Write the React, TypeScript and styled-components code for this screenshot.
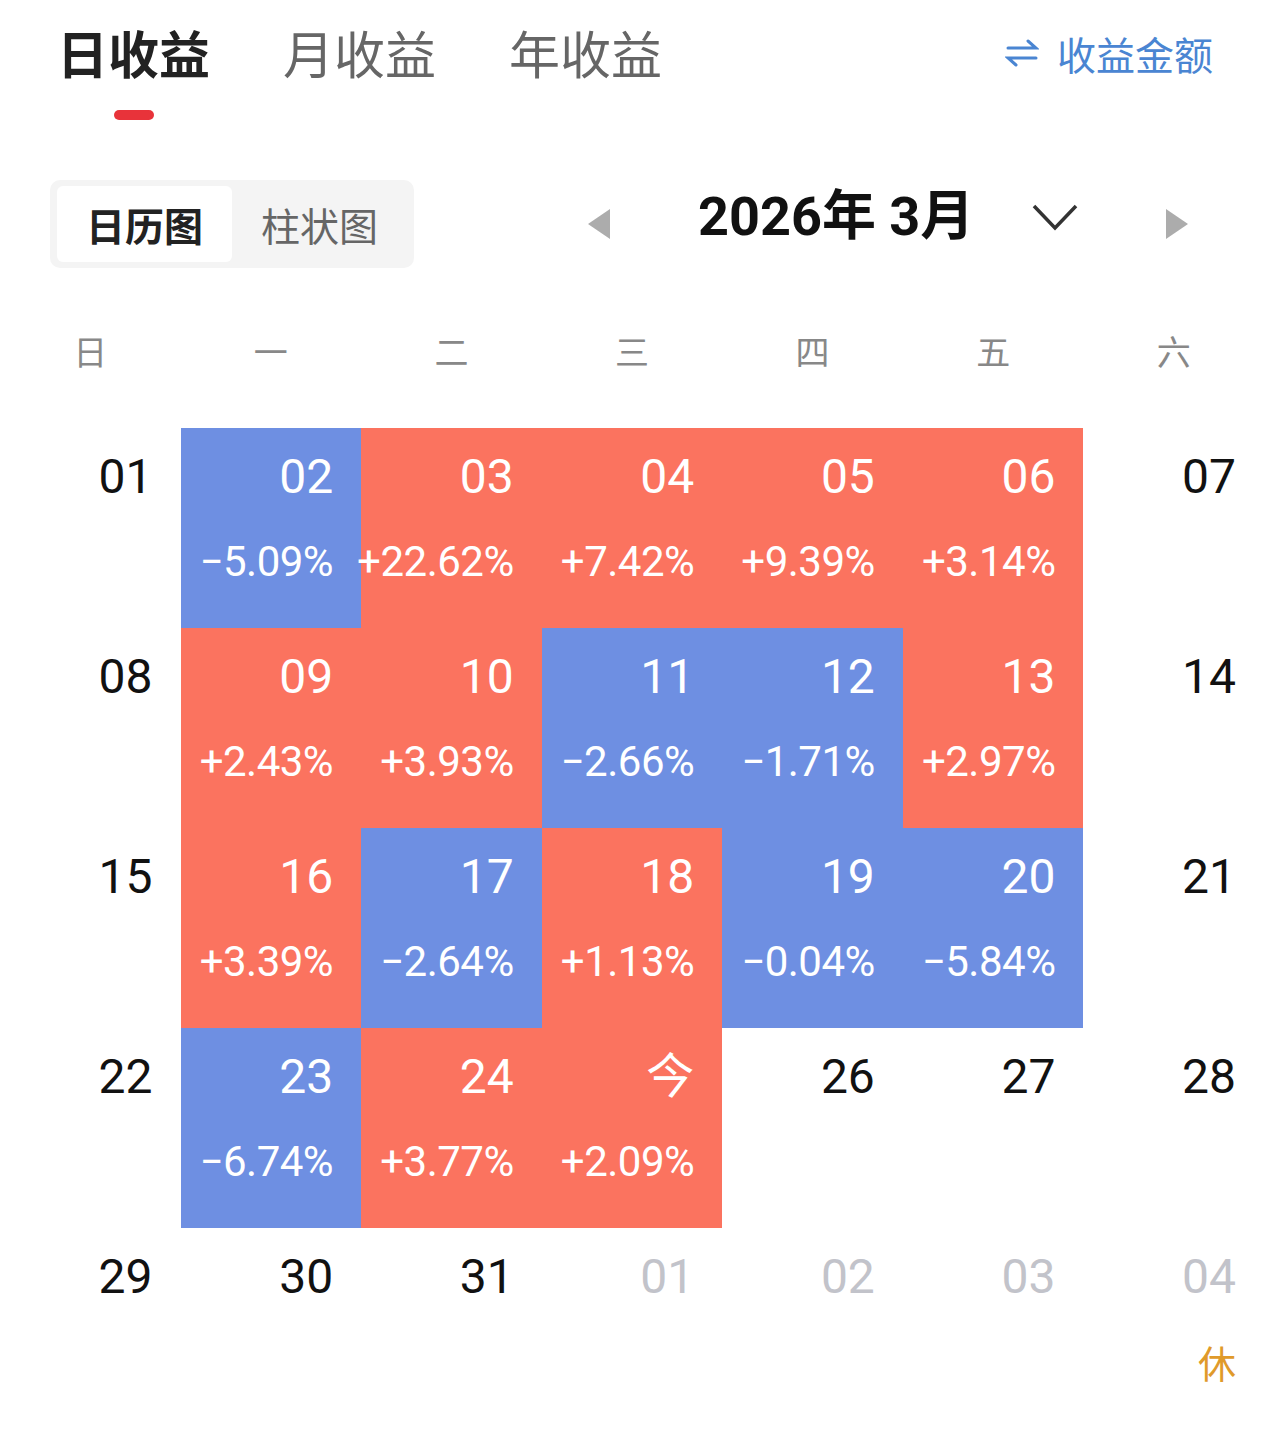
import React from 'react';
import styled, { createGlobalStyle } from 'styled-components';

const GlobalStyle = createGlobalStyle`
  body {
    margin: 0;
    background: #ffffff;
    font-family: Roboto, "Noto Sans CJK SC", sans-serif;
  }
`;

const Page = styled.div`
  width: 1264px;
  display: flex;
  flex-direction: column;
`;

const Header = styled.div`
  display: flex;
  align-items: flex-start;
  padding: 21px 51px 0 57px;
  gap: 73px;
`;

const Tab = styled.div<{ $active?: boolean }>`
  display: flex;
  flex-direction: column;
  align-items: center;

  span {
    font-family: "Noto Sans CJK SC", sans-serif;
    font-size: 51px;
    line-height: 62px;
    font-weight: ${({ $active }) => ($active ? 700 : 400)};
    color: ${({ $active }) => ($active ? '#222' : '#666')};
  }
`;

const Indicator = styled.div<{ $show?: boolean }>`
  margin-top: 27px;
  width: 40px;
  height: 10px;
  border-radius: 5px;
  background: ${({ $show }) => ($show ? '#e8333a' : 'transparent')};
`;

const SwitchLink = styled.div`
  margin-left: auto;
  display: flex;
  align-items: center;
  gap: 18px;
  height: 64px;
  color: #4a85d2;

  span {
    font-family: "Noto Sans CJK SC", sans-serif;
    font-size: 39px;
  }
`;

const ControlRow = styled.div`
  display: flex;
  align-items: center;
  padding: 0 50px;
  margin-top: 60px;
`;

const Segmented = styled.div`
  display: flex;
  width: 364px;
  height: 88px;
  box-sizing: border-box;
  padding: 6px 7px;
  background: #f4f4f4;
  border-radius: 10px;
`;

const Segment = styled.div<{ $active?: boolean }>`
  width: 176px;
  display: flex;
  align-items: center;
  justify-content: center;
  border-radius: 6px;
  background: ${({ $active }) => ($active ? '#ffffff' : 'transparent')};
  font-family: "Noto Sans CJK SC", sans-serif;
  font-size: 39px;
  font-weight: ${({ $active }) => ($active ? 700 : 400)};
  color: ${({ $active }) => ($active ? '#222' : '#666')};
`;

const MonthPicker = styled.div`
  display: flex;
  align-items: center;
  margin-left: 174px;
`;

const MonthTitle = styled.div`
  margin: -14px 58px 0 88px;
  font-family: Roboto, "Noto Sans CJK SC", sans-serif;
  font-size: 54px;
  font-weight: 700;
  color: #111;
  white-space: nowrap;
  line-height: 1;
`;

const Chevron = styled.svg`
  margin-right: 88px;
  margin-top: -12px;
`;

const WeekRow = styled.div`
  display: grid;
  grid-template-columns: repeat(7, minmax(0, 1fr));
  margin-top: 52px;
  height: 60px;
  align-items: center;
`;

const WeekLabel = styled.div`
  text-align: center;
  font-family: "Noto Sans CJK SC", sans-serif;
  font-size: 34px;
  color: #888;
`;

const Grid = styled.div`
  display: grid;
  grid-template-columns: repeat(7, minmax(0, 1fr));
  grid-auto-rows: 200px;
  margin-top: 48px;
`;

type Tone = 'up' | 'down' | 'none';

const toneBg: Record<Tone, string> = {
  up: '#fb735f',
  down: '#6e8fe2',
  none: 'transparent',
};

const Cell = styled.div<{ $tone: Tone }>`
  display: flex;
  flex-direction: column;
  align-items: flex-end;
  box-sizing: border-box;
  padding: 25px 28px 0 0;
  background: ${({ $tone }) => toneBg[$tone]};
  color: ${({ $tone }) => ($tone === 'none' ? '#111' : '#fff')};
`;

const DayNum = styled.div<{ $muted?: boolean }>`
  font-family: Roboto, "Noto Sans CJK SC", sans-serif;
  font-size: 48px;
  line-height: 48px;
  color: ${({ $muted }) => ($muted ? '#c2c3ca' : 'inherit')};
`;

const Percent = styled.div`
  margin-top: 40px;
  font-family: Roboto, sans-serif;
  font-size: 42px;
  line-height: 42px;
  letter-spacing: -0.5px;
  white-space: nowrap;
`;

const Holiday = styled.div`
  margin-top: 40px;
  font-family: "Noto Sans CJK SC", sans-serif;
  font-size: 38px;
  line-height: 42px;
  color: #e09a2a;
`;

type Day = { d: string; p?: string; muted?: boolean; rest?: boolean };

const days: Day[] = [
  { d: '01' }, { d: '02', p: '−5.09%' }, { d: '03', p: '+22.62%' }, { d: '04', p: '+7.42%' },
  { d: '05', p: '+9.39%' }, { d: '06', p: '+3.14%' }, { d: '07' },
  { d: '08' }, { d: '09', p: '+2.43%' }, { d: '10', p: '+3.93%' }, { d: '11', p: '−2.66%' },
  { d: '12', p: '−1.71%' }, { d: '13', p: '+2.97%' }, { d: '14' },
  { d: '15' }, { d: '16', p: '+3.39%' }, { d: '17', p: '−2.64%' }, { d: '18', p: '+1.13%' },
  { d: '19', p: '−0.04%' }, { d: '20', p: '−5.84%' }, { d: '21' },
  { d: '22' }, { d: '23', p: '−6.74%' }, { d: '24', p: '+3.77%' }, { d: '今', p: '+2.09%' },
  { d: '26' }, { d: '27' }, { d: '28' },
  { d: '29' }, { d: '30' }, { d: '31' }, { d: '01', muted: true }, { d: '02', muted: true },
  { d: '03', muted: true }, { d: '04', muted: true, rest: true },
];

const weekdays = ['日', '一', '二', '三', '四', '五', '六'];

function toneOf(p?: string): Tone {
  if (!p) return 'none';
  return p.startsWith('+') ? 'up' : 'down';
}

export default function App() {
  return (
    <Page>
      <GlobalStyle />
      <Header>
        <Tab $active>
          <span>日收益</span>
          <Indicator $show />
        </Tab>
        <Tab>
          <span>月收益</span>
          <Indicator />
        </Tab>
        <Tab>
          <span>年收益</span>
          <Indicator />
        </Tab>
        <SwitchLink>
          <svg width="34" height="30" viewBox="0 0 34 30" fill="none" stroke="#4a85d2" strokeWidth="3" strokeLinecap="round">
            <path d="M3 10 H31 L23 3" />
            <path d="M31 20 H3 L11 27" />
          </svg>
          <span>收益金额</span>
        </SwitchLink>
      </Header>

      <ControlRow>
        <Segmented>
          <Segment $active>日历图</Segment>
          <Segment>柱状图</Segment>
        </Segmented>
        <MonthPicker>
          <svg width="22" height="30" viewBox="0 0 22 30">
            <polygon points="22,0 22,30 0,15" fill="#acacac" />
          </svg>
          <MonthTitle>2026年 3月</MonthTitle>
          <Chevron width="46" height="30" viewBox="0 0 46 30" fill="none" stroke="#333" strokeWidth="3.5">
            <polyline points="2,3 23,25 44,3" />
          </Chevron>
          <svg width="22" height="30" viewBox="0 0 22 30">
            <polygon points="0,0 0,30 22,15" fill="#acacac" />
          </svg>
        </MonthPicker>
      </ControlRow>

      <WeekRow>
        {weekdays.map((w) => (
          <WeekLabel key={w}>{w}</WeekLabel>
        ))}
      </WeekRow>

      <Grid>
        {days.map((day, i) => (
          <Cell key={i} $tone={toneOf(day.p)}>
            <DayNum $muted={day.muted}>{day.d}</DayNum>
            {day.p && <Percent>{day.p}</Percent>}
            {day.rest && <Holiday>休</Holiday>}
          </Cell>
        ))}
      </Grid>
    </Page>
  );
}
